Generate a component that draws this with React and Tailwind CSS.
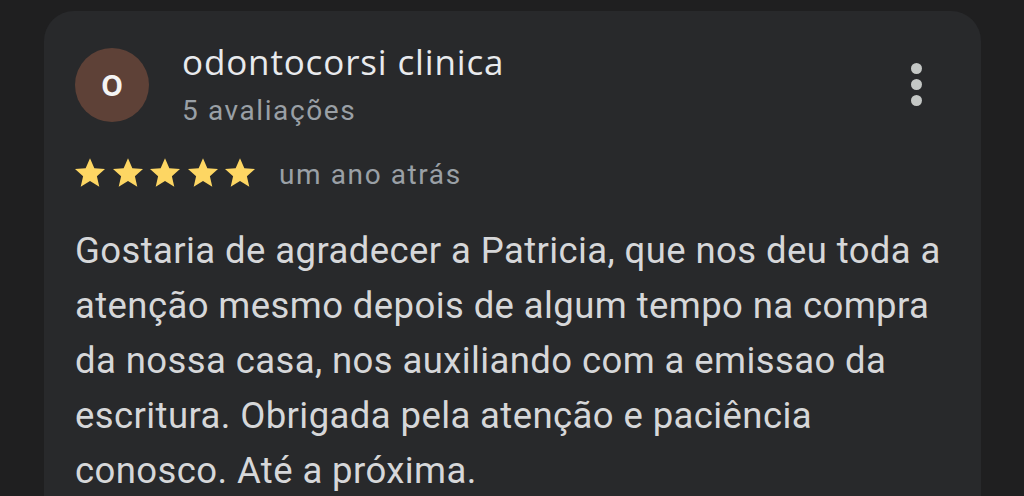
import React from "react";

const Star = () => (
    <svg viewBox="0 0 24 24" className="w-[36px] h-[36px]">
        <path
            fill="#fdd663"
            d="M12 2.2l2.9 6.6 7.1.6-5.4 4.7 1.6 7-6.2-3.7-6.2 3.7 1.6-7L2 9.4l7.1-.6z"
        />
    </svg>
);

const lines = [
    "Gostaria de agradecer a Patricia, que nos deu toda a",
    "atenção mesmo depois de algum tempo na compra",
    "da nossa casa, nos auxiliando com a emissao da",
    "escritura. Obrigada pela atenção e paciência",
    "conosco. Até a próxima.",
];

const App = () => {
    return (
        <div className="w-[1024px] h-[496px] bg-[#1f1f20] overflow-hidden pt-[11px] pl-[44px] font-['Roboto',sans-serif]">
            <div className="w-[937px] h-[520px] bg-[#28292b] rounded-[30px] pl-[31px] pr-[59px] pt-[37px]">
                {/* header */}
                <div className="flex items-start">
                    <div className="w-[74px] h-[74px] rounded-full bg-[#5e4137] flex items-center justify-center text-[#f4f4f4] text-[37px] leading-none font-semibold font-['Open_Sans',sans-serif] shrink-0 pb-[7px]">
                        o
                    </div>
                    <div className="ml-[33px] flex-1 -mt-[8px]">
                        <div className="text-[35px] leading-[44px] text-[#e8eaed] font-['Open_Sans',sans-serif] tracking-[0.85px]">
                            odontocorsi clinica
                        </div>
                        <div className="mt-[10px] text-[28px] leading-[34px] text-[#9aa0a6] tracking-[1.6px]">
                            5 avaliações
                        </div>
                    </div>
                    <div className="flex flex-col gap-[5px] items-center mt-[15px]">
                        <span className="w-[11px] h-[11px] rounded-full bg-[#c4c7c5]"></span>
                        <span className="w-[11px] h-[11px] rounded-full bg-[#c4c7c5]"></span>
                        <span className="w-[11px] h-[11px] rounded-full bg-[#c4c7c5]"></span>
                    </div>
                </div>

                {/* rating */}
                <div className="flex items-start mt-[27px] -ml-[3px]">
                    <div className="flex gap-[1.5px]">
                        <Star />
                        <Star />
                        <Star />
                        <Star />
                        <Star />
                    </div>
                    <span className="ml-[21px] mt-[3px] text-[28px] text-[#9aa0a6] leading-[34px] tracking-[1.6px]">
                        um ano atrás
                    </span>
                </div>

                {/* body */}
                <div className="mt-[31px] text-[36.5px] leading-[55px] text-[#d6d7d9] tracking-[0.4px] whitespace-nowrap">
                    {lines.map((line) => (
                        <p key={line}>{line}</p>
                    ))}
                </div>
            </div>
        </div>
    );
};

export default App;
